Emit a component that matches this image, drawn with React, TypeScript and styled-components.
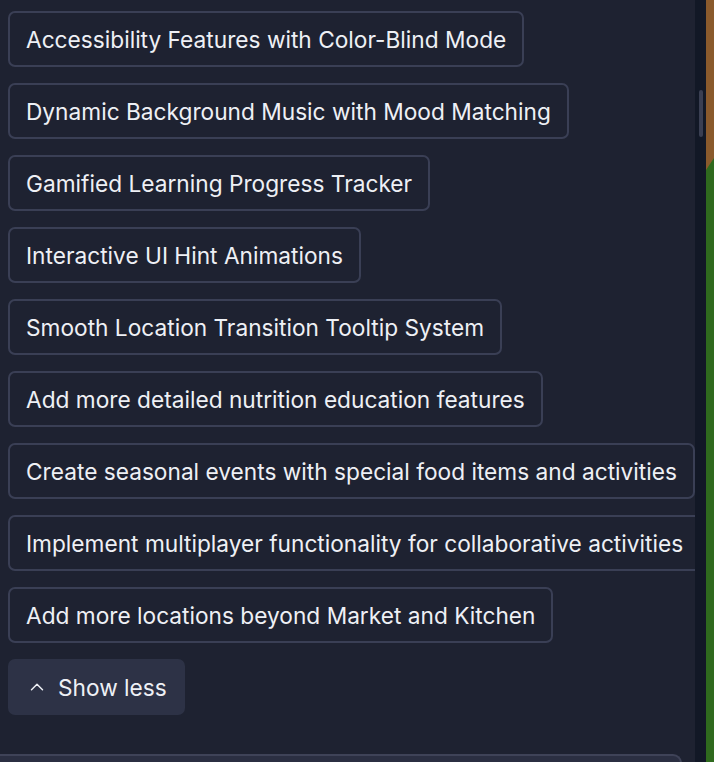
import React from 'react';
import styled, { createGlobalStyle } from 'styled-components';
import { ChevronUp } from 'lucide-react';

const ideas = [
  'Accessibility Features with Color-Blind Mode',
  'Dynamic Background Music with Mood Matching',
  'Gamified Learning Progress Tracker',
  'Interactive UI Hint Animations',
  'Smooth Location Transition Tooltip System',
  'Add more detailed nutrition education features',
  'Create seasonal events with special food items and activities',
  'Implement multiplayer functionality for collaborative activities',
  'Add more locations beyond Market and Kitchen',
];

const App = () => {
  return (
    <>
      <GlobalStyle />
      <Layout>
        <Panel>
          <List>
            {ideas.map((idea) => (
              <Suggestion key={idea}>{idea}</Suggestion>
            ))}
            <ShowLess>
              <ChevronUp size={22} strokeWidth={1.6} />
              Show less
            </ShowLess>
          </List>
          <Composer />
        </Panel>
        <Track>
          <Thumb />
        </Track>
        <Strip>
          <svg width="8" height="762" viewBox="0 0 8 762" preserveAspectRatio="none">
            <rect x="0" y="0" width="8" height="762" fill="#2f6a1e" />
            <polygon points="0,0 8,0 8,158 0,170" fill="#8a5a2c" />
          </svg>
        </Strip>
      </Layout>
    </>
  );
};

const GlobalStyle = createGlobalStyle`
  html, body {
    margin: 0;
    padding: 0;
    background: #1e2231;
  }
  body {
    font-family: Inter, "Noto Sans", sans-serif;
  }
`;

const Layout = styled.div`
  display: flex;
  height: 762px;
  width: 714px;
  overflow: hidden;
`;

const Panel = styled.div`
  flex: 1;
  min-width: 0;
  overflow: hidden;
  background: #1e2231;
  display: flex;
  flex-direction: column;
`;

const List = styled.div`
  display: flex;
  flex-direction: column;
  align-items: flex-start;
  gap: 16px;
  padding: 11px 0 0 8px;
`;

const Suggestion = styled.button`
  display: flex;
  align-items: center;
  height: 56px;
  padding: 0 16px;
  border: 2px solid #3a3f55;
  border-radius: 7px;
  background: #1e2231;
  color: #eef0f5;
  font-family: Inter, "Noto Sans", sans-serif;
  font-size: 22.7px;
  white-space: nowrap;
  flex-shrink: 0;
  cursor: pointer;
`;

const ShowLess = styled.button`
  display: flex;
  align-items: center;
  gap: 10px;
  height: 56px;
  padding: 0 18px 0 18px;
  border: none;
  border-radius: 7px;
  background: #2d3246;
  color: #eef0f5;
  font-family: Inter, "Noto Sans", sans-serif;
  font-size: 22.7px;
  cursor: pointer;
`;

const Composer = styled.div`
  margin-top: 39px;
  width: 680px;
  height: 40px;
  flex-shrink: 0;
  border-top: 2px solid #3f4358;
  border-right: 2px solid #3f4358;
  border-top-right-radius: 9px;
  background: #2b2f42;
`;

const Track = styled.div`
  width: 11px;
  flex-shrink: 0;
  background: #121826;
  padding-top: 90px;
  display: flex;
  justify-content: center;
`;

const Thumb = styled.div`
  width: 4px;
  height: 47px;
  border-radius: 2px;
  background: #3a3f52;
`;

const Strip = styled.div`
  width: 8px;
  flex-shrink: 0;
  svg {
    display: block;
  }
`;

export default App;
